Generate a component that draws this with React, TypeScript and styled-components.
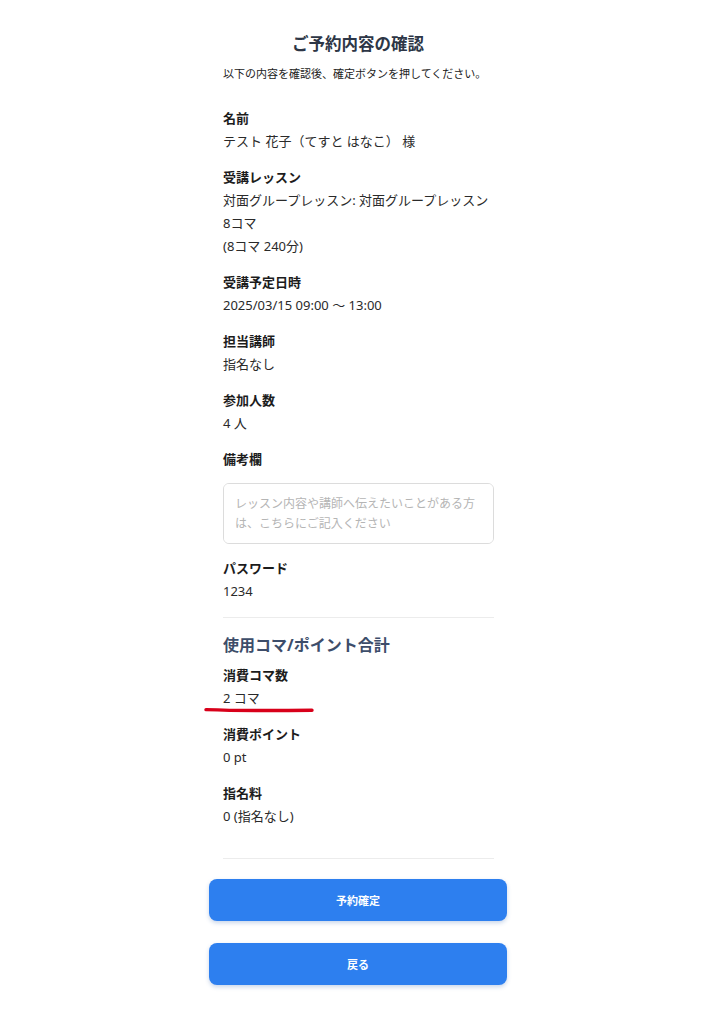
import React from "react";
import styled, { createGlobalStyle } from "styled-components";

const GlobalStyle = createGlobalStyle`
  html, body {
    margin: 0;
    padding: 0;
    background: #ffffff;
  }
  body {
    font-family: "Noto Sans", "Noto Sans CJK JP", "Liberation Sans", sans-serif;
    color: #222222;
    -webkit-font-smoothing: antialiased;
  }
`;

interface Field {
  label: string;
  lines: string[];
  marked?: boolean;
}

const bookingFields: Field[] = [
  { label: "名前", lines: ["テスト 花子（てすと はなこ） 様"] },
  {
    label: "受講レッスン",
    lines: ["対面グループレッスン: 対面グループレッスン", "8コマ", "(8コマ 240分)"],
  },
  { label: "受講予定日時", lines: ["2025/03/15 09:00 〜 13:00"] },
  { label: "担当講師", lines: ["指名なし"] },
  { label: "参加人数", lines: ["4 人"] },
];

const totalFields: Field[] = [
  { label: "消費コマ数", lines: ["2 コマ"], marked: true },
  { label: "消費ポイント", lines: ["0 pt"] },
  { label: "指名料", lines: ["0 (指名なし)"] },
];

const FieldBlock: React.FC<{ field: Field }> = ({ field }) => (
  <Row>
    <Label>{field.label}</Label>
    {field.lines.map((line, i) => (
      <Value key={i}>
        {line}
        {field.marked && (
          <Marker viewBox="0 0 112 6" preserveAspectRatio="none">
            <path d="M3 2.6 C 30 3.6, 70 3.8, 109 3.2" />
          </Marker>
        )}
      </Value>
    ))}
  </Row>
);

const App: React.FC = () => {
  return (
    <>
      <GlobalStyle />
      <Page>
        <Card>
          <Title>ご予約内容の確認</Title>
          <Lead>以下の内容を確認後、確定ボタンを押してください。</Lead>

          <Content>
            {bookingFields.map((f) => (
              <FieldBlock key={f.label} field={f} />
            ))}

            <Row>
              <Label>備考欄</Label>
              <Note placeholder="レッスン内容や講師へ伝えたいことがある方は、こちらにご記入ください" />
            </Row>

            <Row>
              <Label>パスワード</Label>
              <Value>1234</Value>
            </Row>

            <Divider />

            <SectionTitle>使用コマ/ポイント合計</SectionTitle>
            {totalFields.map((f) => (
              <FieldBlock key={f.label} field={f} />
            ))}

            <Divider $last />
          </Content>

          <Actions>
            <PrimaryButton type="button">予約確定</PrimaryButton>
            <PrimaryButton type="button">戻る</PrimaryButton>
          </Actions>
        </Card>
      </Page>
    </>
  );
};

const Page = styled.div`
  display: flex;
  justify-content: center;
  padding: 0 8px 38px 0;
`;

const Card = styled.div`
  width: 298px;
  display: flex;
  flex-direction: column;
  padding-top: 32px;
`;

const Title = styled.h1`
  margin: 0;
  font-size: 16.5px;
  line-height: 24px;
  font-weight: 700;
  text-align: center;
  color: #2d3646;
`;

const Lead = styled.p`
  margin: 9px 0 0;
  padding: 0 14px;
  font-size: 11px;
  line-height: 18px;
  color: #222222;
`;

const Content = styled.div`
  padding: 24px 13px 0 14px;
  display: flex;
  flex-direction: column;
`;

const Row = styled.div`
  display: flex;
  flex-direction: column;
  margin-bottom: 13px;
`;

const Label = styled.div`
  font-size: 13px;
  line-height: 23px;
  font-weight: 700;
  color: #1c1c1c;
`;

const Value = styled.div`
  position: relative;
  font-size: 13px;
  line-height: 23px;
  color: #2a2a2a;
  white-space: nowrap;
`;

const Marker = styled.svg`
  position: absolute;
  left: -20px;
  top: 20px;
  width: 112px;
  height: 6px;
  overflow: visible;

  path {
    fill: none;
    stroke: #d8001a;
    stroke-width: 3.4;
    stroke-linecap: round;
  }
`;

const Note = styled.textarea`
  margin-top: 12px;
  height: 61px;
  box-sizing: border-box;
  padding: 10px 11px;
  border: 1px solid #dcdcdc;
  border-radius: 6px;
  resize: none;
  font-family: inherit;
  font-size: 12px;
  line-height: 20px;
  color: #333;
  outline: none;

  &::placeholder {
    color: #b5b5b5;
  }
`;

const Divider = styled.hr<{ $last?: boolean }>`
  border: none;
  height: 1px;
  background: #ececec;
  margin: ${(p) => (p.$last ? "17px 0 20px" : "1px 0 15px")};
`;

const SectionTitle = styled.h2`
  margin: 0 0 7px;
  font-size: 16px;
  line-height: 24px;
  font-weight: 700;
  color: #3d4d6a;
`;

const Actions = styled.div`
  display: flex;
  flex-direction: column;
  gap: 22px;
`;

const PrimaryButton = styled.button`
  height: 42px;
  border: none;
  border-radius: 8px;
  background: #2d7fef;
  color: #ffffff;
  font-family: inherit;
  font-size: 11px;
  font-weight: 700;
  box-shadow: 0 2px 4px rgba(40, 90, 170, 0.25);
  cursor: pointer;
`;

export default App;
